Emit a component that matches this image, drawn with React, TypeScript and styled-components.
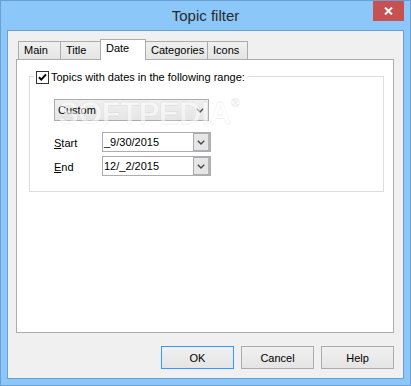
import { FC } from "react";
import styled, { createGlobalStyle } from "styled-components";

const GlobalStyle = createGlobalStyle`
  body {
    margin: 0;
    font-family: "Liberation Sans", Arial, sans-serif;
    font-size: 11px;
    color: #000;
  }
`;

//Window frame
const Frame = styled.div`
  width: 411px;
  height: 386px;
  box-sizing: border-box;
  border: 1px solid #6b9ed2;
  background: #8cc7f9;
  padding: 0 6px 6px;
  display: flex;
  flex-direction: column;
`;

const TitleBar = styled.div`
  position: relative;
  height: 29px;
  display: flex;
  align-items: center;
  justify-content: center;
  font-size: 15px;
  color: #2b2b2b;
  padding-bottom: 1px;
  box-sizing: border-box;
`;

const CloseButton = styled.div`
  position: absolute;
  top: 0;
  right: 0;
  width: 31px;
  height: 20px;
  background: #c75050;
  display: flex;
  align-items: center;
  justify-content: center;
`;

const Client = styled.div`
  flex: 1;
  border: 1px solid #6b9ed2;
  background: #f0f0f0;
  padding: 8px 9px 9px 8px;
  display: flex;
  flex-direction: column;
`;

const TabStrip = styled.div`
  display: flex;
  align-items: flex-end;
  padding-left: 2px;
`;

const Tab = styled.div<{ $w: number; $active?: boolean }>`
  box-sizing: border-box;
  width: ${(p) => p.$w}px;
  height: ${(p) => (p.$active ? 21 : 18)}px;
  margin-bottom: ${(p) => (p.$active ? -1 : 0)}px;
  margin-left: -1px;
  &:first-child {
    margin-left: 0;
  }
  padding-left: 5px;
  line-height: 17px;
  border: 1px solid #acacac;
  border-bottom: none;
  background: ${(p) =>
    p.$active ? "#fff" : "linear-gradient(#f0f0f0, #e5e5e5)"};
  position: relative;
  z-index: ${(p) => (p.$active ? 2 : 1)};
  white-space: nowrap;
`;

const Panel = styled.div`
  flex: 1;
  position: relative;
  border: 1px solid #acacac;
  background: #fff;
  padding: 9px 9px 0 12px;
`;

const GroupBox = styled.fieldset`
  margin: 0;
  padding: 0;
  min-width: 0;
  border: 1px solid #dcdcdc;
`;

const Legend = styled.legend`
  margin-left: 4px;
  padding: 2px 3px 0 2px;
  display: flex;
  align-items: center;
  gap: 2px;
  line-height: 13px;
`;

const CheckBox = styled.span`
  width: 13px;
  height: 13px;
  box-sizing: border-box;
  border: 1px solid #333;
  background: #fff;
  display: flex;
`;

const GroupBody = styled.div`
  padding: 15px 0 15px 24px;
  display: flex;
  flex-direction: column;
`;

const Combo = styled.div`
  box-sizing: border-box;
  width: 155px;
  height: 22px;
  border: 1px solid #acacac;
  background: linear-gradient(#f0f0f0, #e5e5e5);
  display: flex;
  align-items: center;
  padding: 0 4px 0 3px;
  justify-content: space-between;
`;

const DateGrid = styled.div`
  margin-top: 11px;
  display: grid;
  grid-template-columns: 48px 109px;
  row-gap: 4px;
  align-items: center;
`;

const Label = styled.span`
  padding-top: 1px;
`;

const DateBox = styled.div`
  box-sizing: border-box;
  height: 20px;
  border: 1px solid #abadb3;
  display: flex;
  align-items: stretch;
  background: #fff;
`;

const DateText = styled.span`
  flex: 1;
  padding-left: 1px;
  display: flex;
  align-items: center;
`;

const DropButton = styled.span`
  width: 17px;
  box-sizing: border-box;
  border: 1px solid #acacac;
  border-right: 2px solid #b4b4b4;
  background: #e6e6e6;
  display: flex;
  align-items: center;
  justify-content: center;
`;

const Watermark = styled.div`
  position: absolute;
  left: 41px;
  top: 36px;
  font-size: 31px;
  font-weight: bold;
  letter-spacing: -0.5px;
  color: rgba(255, 255, 255, 0.55);
  -webkit-text-stroke: 1px rgba(0, 0, 0, 0.06);
  pointer-events: none;
  sup {
    font-size: 12px;
    vertical-align: top;
  }
`;

const ButtonRow = styled.div`
  margin-top: 13px;
  display: flex;
  justify-content: flex-end;
  gap: 7px;
`;

const Button = styled.div<{ $default?: boolean }>`
  box-sizing: border-box;
  width: 73px;
  height: 23px;
  border: 1px solid ${(p) => (p.$default ? "#3399ff" : "#acacac")};
  background: linear-gradient(#f0f0f0, #e5e5e5);
  display: flex;
  align-items: center;
  justify-content: center;
`;

const Chevron: FC = () => (
  <svg width="8" height="5" viewBox="0 0 8 5">
    <path d="M0.8 0.8 L4 4 L7.2 0.8" fill="none" stroke="#444" strokeWidth="1.4" />
  </svg>
);

const tabs = [
  { name: "Main", w: 43 },
  { name: "Title", w: 41 },
  { name: "Date", w: 46 },
  { name: "Categories", w: 63 },
  { name: "Icons", w: 41 },
];

const App: FC = () => {
  return (
    <>
      <GlobalStyle />
      <Frame>
        <TitleBar>
          Topic filter
          <CloseButton>
            <svg width="9" height="8" viewBox="0 0 9 8">
              <path d="M1 0.5 L8 7.5 M8 0.5 L1 7.5" stroke="#fff" strokeWidth="2" />
            </svg>
          </CloseButton>
        </TitleBar>
        <Client>
          <TabStrip>
            {tabs.map((t) => (
              <Tab key={t.name} $w={t.w} $active={t.name === "Date"}>
                {t.name}
              </Tab>
            ))}
          </TabStrip>
          <Panel>
            <GroupBox>
              <Legend>
                <CheckBox>
                  <svg width="11" height="11" viewBox="0 0 11 11">
                    <path d="M2 5.2 L4.3 7.6 L9 2.3" fill="none" stroke="#000" strokeWidth="2" />
                  </svg>
                </CheckBox>
                Topics with dates in the following range:
              </Legend>
              <GroupBody>
                <Combo>
                  <span>Custom</span>
                  <Chevron />
                </Combo>
                <DateGrid>
                  <Label>
                    <u>S</u>tart
                  </Label>
                  <DateBox>
                    <DateText>_9/30/2015</DateText>
                    <DropButton>
                      <Chevron />
                    </DropButton>
                  </DateBox>
                  <Label>
                    <u>E</u>nd
                  </Label>
                  <DateBox>
                    <DateText>12/_2/2015</DateText>
                    <DropButton>
                      <Chevron />
                    </DropButton>
                  </DateBox>
                </DateGrid>
              </GroupBody>
            </GroupBox>
            <Watermark>
              SOFTPEDIA<sup>®</sup>
            </Watermark>
          </Panel>
          <ButtonRow>
            <Button $default>OK</Button>
            <Button>Cancel</Button>
            <Button>Help</Button>
          </ButtonRow>
        </Client>
      </Frame>
    </>
  );
};

export default App;
